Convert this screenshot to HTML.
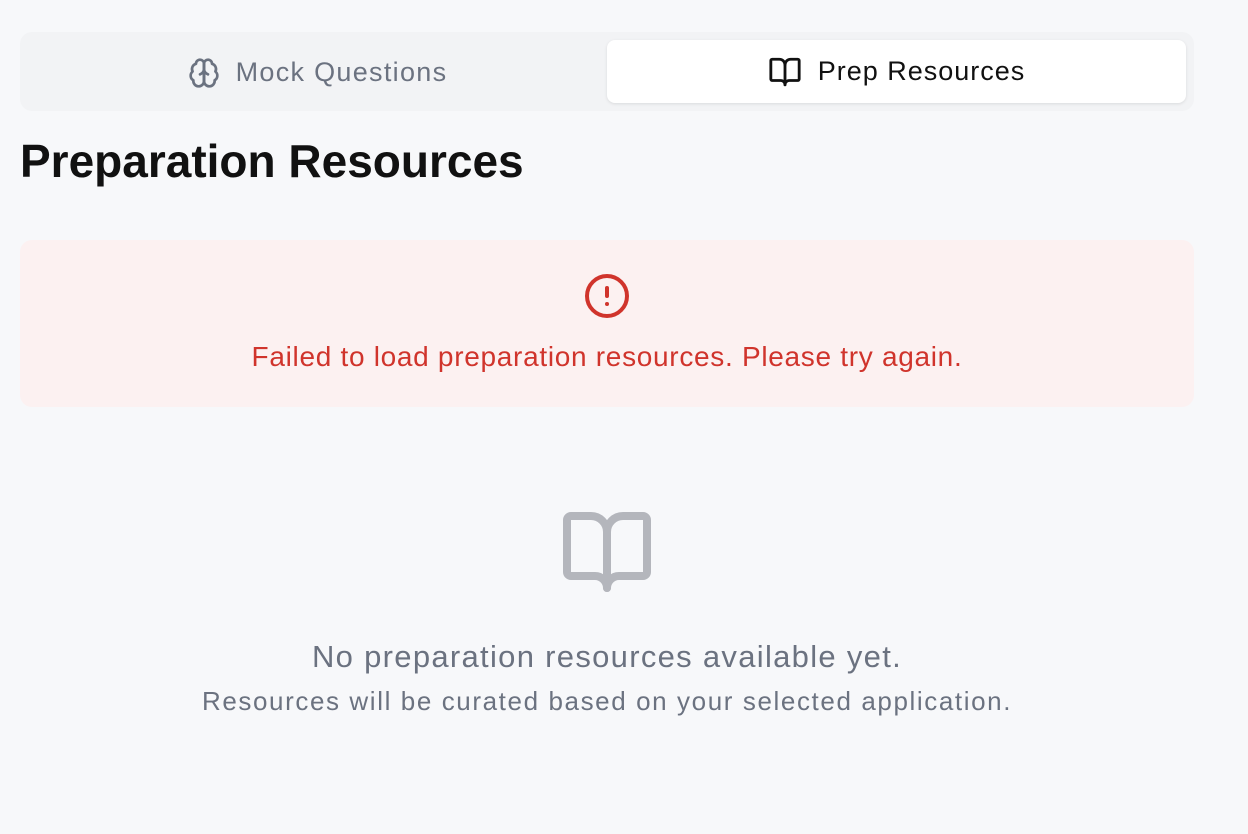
<!DOCTYPE html>
<html><head><meta charset="utf-8"><style>
body{margin:0;background:#f7f8fa;font-family:"Liberation Sans",sans-serif;width:1248px;height:834px;overflow:hidden;position:relative}
.tabs{position:absolute;left:20px;top:32px;width:1174px;height:79px;background:#f2f3f5;border-radius:12px}
.tab{position:absolute;top:9px;height:63px;display:flex;align-items:center;justify-content:center;gap:16px;font-size:27px}
.t1{left:8px;width:579px;color:#6b7280;letter-spacing:1.3px}
.t2{left:587px;top:8px;width:579px;background:#fff;border-radius:8px;color:#111;box-shadow:0 1px 3px rgba(0,0,0,.1);letter-spacing:1px}
h1{position:absolute;left:20px;top:134px;margin:0;font-size:46px;font-weight:bold;color:#111;letter-spacing:0}
.err{position:absolute;left:20px;top:240px;width:1174px;height:167px;background:#fcf1f1;border-radius:12px}
.et{position:absolute;left:0;width:1214px;text-align:center;top:341px;color:#d0342c;font-size:28px;letter-spacing:0.7px}
.m1{position:absolute;left:0;width:1214px;text-align:center;top:639px;color:#6b7280;font-size:31px;letter-spacing:1.3px}
.m2{position:absolute;left:0;width:1214px;text-align:center;top:686px;color:#6b7280;font-size:26px;letter-spacing:1.6px}
</style></head><body>
<div class="tabs">
<div class="tab t1"><svg width="32" height="32" viewBox="0 0 24 24" fill="none" stroke="#6b7280" stroke-width="2" stroke-linecap="round" stroke-linejoin="round"><path d="M12 5a3 3 0 1 0-5.997.125 4 4 0 0 0-2.526 5.77 4 4 0 0 0 .556 6.588A4 4 0 1 0 12 18Z"/><path d="M12 5a3 3 0 1 1 5.997.125 4 4 0 0 1 2.526 5.77 4 4 0 0 1-.556 6.588A4 4 0 1 1 12 18Z"/><path d="M15 13a4.5 4.5 0 0 1-3-4 4.5 4.5 0 0 1-3 4"/><path d="M12 18V5"/></svg>Mock Questions</div>
<div class="tab t2"><svg width="34" height="34" viewBox="0 0 24 24" fill="none" stroke="#111" stroke-width="2" stroke-linecap="round" stroke-linejoin="round"><path d="M12 7v14"/><path d="M3 18a1 1 0 0 1-1-1V4a1 1 0 0 1 1-1h5a4 4 0 0 1 4 4 4 4 0 0 1 4-4h5a1 1 0 0 1 1 1v13a1 1 0 0 1-1 1h-6a3 3 0 0 0-3 3 3 3 0 0 0-3-3z"/></svg>Prep Resources</div>
</div>
<h1>Preparation Resources</h1>
<div class="err"></div>
<svg style="position:absolute;left:583px;top:272px" width="48" height="48" viewBox="0 0 24 24" fill="none" stroke="#d0342c" stroke-width="2" stroke-linecap="round" stroke-linejoin="round"><circle cx="12" cy="12" r="10"/><line x1="12" y1="8" x2="12" y2="12"/><line x1="12" y1="16" x2="12.01" y2="16"/></svg>
<div class="et">Failed to load preparation resources. Please try again.</div>
<svg style="position:absolute;left:559px;top:504px" width="96" height="96" viewBox="0 0 24 24" fill="none" stroke="#b4b6bc" stroke-width="2" stroke-linecap="round" stroke-linejoin="round"><path d="M12 7v14"/><path d="M3 18a1 1 0 0 1-1-1V4a1 1 0 0 1 1-1h5a4 4 0 0 1 4 4 4 4 0 0 1 4-4h5a1 1 0 0 1 1 1v13a1 1 0 0 1-1 1h-6a3 3 0 0 0-3 3 3 3 0 0 0-3-3z"/></svg>
<div class="m1">No preparation resources available yet.</div>
<div class="m2">Resources will be curated based on your selected application.</div>
</body></html>
